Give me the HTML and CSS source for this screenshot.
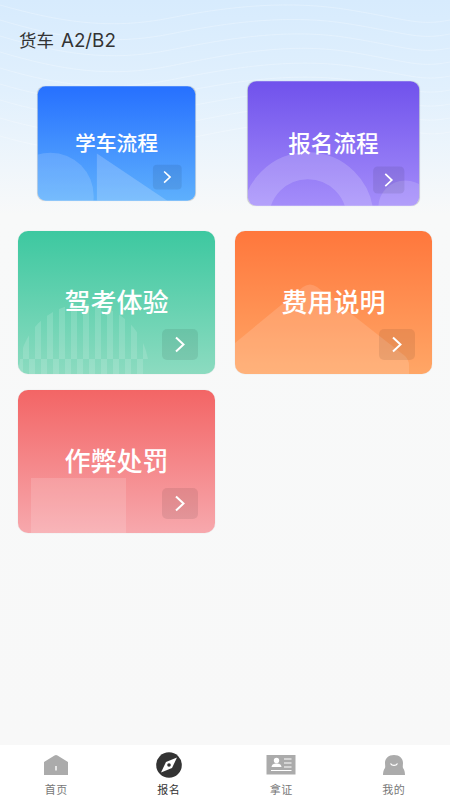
FILE: index.html
```html
<!DOCTYPE html>
<html lang="zh-CN">
<head>
<meta charset="utf-8">
<title>报名</title>
<link rel="stylesheet" href="styles.css">
</head>
<body>
<div class="page">
  <main class="main">
    <svg class="waves" viewBox="0 0 450 215" preserveAspectRatio="none" fill="none" stroke="#fff" stroke-opacity=".25" stroke-width="1">
      <path d="M0 5C60 22 110 30 170 18S290 0 350 10 420 26 450 20"/>
      <path d="M0 20C60 38 110 46 170 34S290 14 350 24 420 40 450 34"/>
      <path d="M0 36C60 54 110 62 170 50S290 28 350 38 420 54 450 48"/>
      <path d="M0 52C60 70 110 78 170 66S290 42 350 52 420 68 450 62"/>
      <path d="M0 68C60 86 110 92 170 80S290 58 350 66 420 82 450 76"/>
      <path d="M0 84C60 102 110 106 170 94S290 72 350 80 420 96 450 90"/>
      <path d="M0 100C60 118 110 122 170 110S290 86 350 94 420 110 450 104"/>
      <path d="M0 118C60 136 110 138 170 126S290 100 350 108 420 124 450 118"/>
      <path d="M0 136C60 154 110 154 170 142S290 116 350 122 420 138 450 132"/>
    </svg>
    <h1 class="title">货车 <span class="plate">A2/B2</span></h1>
    <div class="grid">
      <a class="card blue small">
        <svg class="decor" viewBox="0 0 197 143"><circle cx="16" cy="137" r="54" fill="#fff" fill-opacity=".15"/><path d="M74 84 162 143H74Z" fill="#fff" fill-opacity=".2"/></svg>
        <span class="name">学车流程</span>
        <span class="go"><svg viewBox="0 0 36 31" class="chev"><path d="M14 8.500 21.500 15.500 14 22.500"/></svg></span>
      </a>
      <a class="card purple medium">
        <svg class="decor" viewBox="0 0 197 143" fill="none"><circle cx="69" cy="157" r="60" stroke="#fff" stroke-opacity=".18" stroke-width="31"/><circle cx="181" cy="145" r="31" fill="#fff" fill-opacity=".15"/></svg>
        <span class="name">报名流程</span>
        <span class="go"><svg viewBox="0 0 36 31" class="chev"><path d="M14 8.500 21.500 15.500 14 22.500"/></svg></span>
      </a>
      <a class="card green">
        <svg class="decor" viewBox="0 0 197 143">
          <defs>
            <clipPath id="dome"><ellipse cx="66" cy="140" rx="65" ry="67"/></clipPath>
          </defs>
          <g clip-path="url(#dome)" fill="#fff" fill-opacity=".14">
            <path d="M5 70h6v58H5ZM17 70h6v58h-6ZM29 70h6v58h-6ZM41 70h6v58h-6ZM53 70h6v58h-6ZM65 70h6v58h-6ZM77 70h6v58h-6ZM89 70h6v58h-6ZM101 70h6v58h-6ZM113 70h6v58h-6ZM125 70h6v58h-6Z"/>
            <path d="M0 128h5v15H0ZM11 128h6v15h-6ZM23 128h6v15h-6ZM35 128h6v15h-6ZM47 128h6v15h-6ZM59 128h6v15h-6ZM71 128h6v15h-6ZM83 128h6v15h-6ZM95 128h6v15h-6ZM107 128h6v15h-6ZM119 128h6v15h-6Z"/>
          </g>
        </svg>
        <span class="name">驾考体验</span>
        <span class="go"><svg viewBox="0 0 36 31" class="chev"><path d="M14 8.500 21.500 15.500 14 22.500"/></svg></span>
      </a>
      <a class="card orange">
        <svg class="decor" viewBox="0 0 197 143"><path d="M0 112 68 56Q75 51 82 56L170 125Q174 129 174 134V143H0Z" fill="#fff" fill-opacity=".14"/></svg>
        <span class="name">费用说明</span>
        <span class="go"><svg viewBox="0 0 36 31" class="chev"><path d="M14 8.500 21.500 15.500 14 22.500"/></svg></span>
      </a>
      <a class="card red">
        <svg class="decor" viewBox="0 0 197 143"><rect x="13" y="88" width="95" height="55" fill="#fff" fill-opacity=".15"/></svg>
        <span class="name">作弊处罚</span>
        <span class="go"><svg viewBox="0 0 36 31" class="chev"><path d="M14 8.500 21.500 15.500 14 22.500"/></svg></span>
      </a>
    </div>
  </main>
  <nav class="tabs">
    <a class="tab">
      <svg class="ico" viewBox="0 0 30 26"><path d="M3 23V10L13.500 3.500Q15 2.500 16.500 3.500L27 10V23Z" fill="#ababab"/><rect x="14.300" y="14" width="1.400" height="4.500" fill="#fff"/></svg>
      <span>首页</span>
    </a>
    <a class="tab on">
      <svg class="ico" viewBox="0 0 30 26"><circle cx="15" cy="13" r="12.800" fill="#333"/><path d="M23 5.500 18 16 7 20.500 12 10Z" fill="#fff"/><circle cx="15" cy="13" r="1.800" fill="#333"/></svg>
      <span>报名</span>
    </a>
    <a class="tab">
      <svg class="ico" viewBox="0 0 30 26"><rect x="0.500" y="3" width="29" height="19.500" fill="#ababab"/><circle cx="10.500" cy="8.500" r="2.700" fill="#fff"/><path d="M5.500 15C6 12 8 11.500 10.500 11.500S15 12 15.500 15Z" fill="#fff"/><path d="M18 7h7.500M18 11h7.500M18 15h7.500M5 18.500h20.500" stroke="#fff" stroke-width="1.200" fill="none"/></svg>
      <span>拿证</span>
    </a>
    <a class="tab">
      <svg class="ico" viewBox="0 0 30 26"><path d="M15 3C20.500 3 24 6.500 24 11 24 13 23.500 14.500 24 16 25.500 18 26 20.500 26 23H4C4 20.500 4.500 18 6 16 6.500 14.500 6 13 6 11 6 6.500 9.500 3 15 3Z" fill="#ababab"/><path d="M11.500 11.500C13 14 17 14 18.500 11.500" stroke="#fff" stroke-width="1.300" fill="none"/></svg>
      <span>我的</span>
    </a>
  </nav>
</div>
</body>
</html>
```
FILE: styles.css
```css
* { box-sizing: border-box; }
html, body { margin: 0; padding: 0; }
body {
  font-family: "Noto Sans CJK SC", "Noto Sans", sans-serif;
  background: #f8f8f8;
}
.page {
  width: 450px;
  height: 800px;
  display: flex;
  flex-direction: column;
  overflow: hidden;
}
.main {
  position: relative;
  flex: 1;
  padding: 0 18px;
  background: linear-gradient(180deg, #d7ebfd 0, #e1f0fd 90px, #f0f6fb 170px, #f8f9f9 215px, #f8f8f8 100%);
}
.waves {
  position: absolute;
  left: 0;
  top: 0;
  width: 450px;
  height: 215px;
}
.title {
  position: relative;
  margin: 0;
  padding: 27px 0 0 1px;
  height: 72px;
  font-size: 17.500px;
  line-height: 26px;
  font-weight: 400;
  color: #333;
  word-spacing: 3px;
}
.plate {
  font-family: "Inter", "Noto Sans", sans-serif;
  font-size: 18.800px;
}
.grid {
  position: relative;
  display: grid;
  grid-template-columns: 197px 197px;
  grid-auto-rows: 143px;
  column-gap: 20px;
  row-gap: 16px;
}
.card {
  position: relative;
  display: flex;
  align-items: center;
  justify-content: center;
  overflow: hidden;
  border-radius: 10px;
  box-shadow: 0 0 1px rgba(0, 0, 0, .2);
}
.small { transform: scale(.8); }
.medium { transform: scale(.87); }
.blue { background: linear-gradient(180deg, #2670ff, #5eb0fd); }
.purple { background: linear-gradient(180deg, #7052ec, #a48dfa); }
.green { background: linear-gradient(180deg, #3dc8a0, #8cdbc0); }
.orange { background: linear-gradient(180deg, #ff773c, #ffa666); }
.red { background: linear-gradient(180deg, #f36565, #f7a8ad); }
.decor {
  position: absolute;
  left: 0;
  top: 0;
  width: 197px;
  height: 143px;
}
.name {
  position: relative;
  padding-bottom: 3px;
  font-size: 26px;
  line-height: 36px;
  font-weight: 500;
  color: #fff;
}
.go {
  position: absolute;
  right: 17px;
  bottom: 14px;
  width: 36px;
  height: 31px;
  border-radius: 5px;
  background: rgba(0, 0, 0, .08);
}
.chev {
  display: block;
  width: 36px;
  height: 31px;
  fill: none;
  stroke: #fff;
  stroke-width: 2;
}
.tabs {
  flex: none;
  height: 55px;
  display: grid;
  grid-template-columns: repeat(4, 1fr);
  background: #fff;
}
.tab {
  display: flex;
  flex-direction: column;
  align-items: center;
  padding-top: 7px;
  font-size: 11px;
  line-height: 16px;
  letter-spacing: .5px;
  color: #777;
}
.tab.on { color: #333; }
.ico {
  display: block;
  width: 30px;
  height: 26px;
  margin-bottom: 3px;
}
```
